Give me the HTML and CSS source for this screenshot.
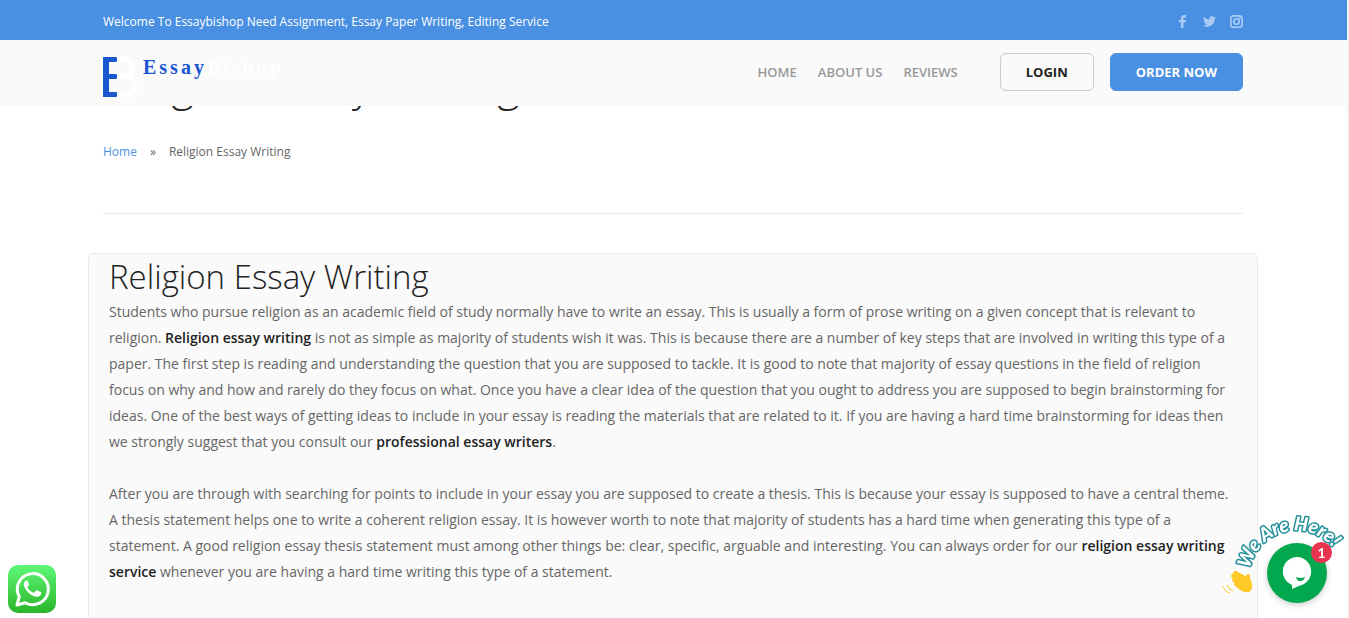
FILE: index.html
```html
<!DOCTYPE html>
<html lang="en">
    <head>
        <meta charset="utf-8">
        <meta name="viewport" content="width=device-width, initial-scale=1">
        <title>Religion Essay Writing</title>
        <link rel="stylesheet" href="styles.css">
    </head>
    <body>
        <header class="site_header">
            <div class="topbar">
                <div class="container topbar_cont">
                    <p class="welcome">Welcome To Essaybishop Need Assignment, Essay Paper Writing, Editing Service</p>
                    <div class="social">
                        <a href="#" aria-label="Facebook">
                            <svg width="13" height="13" viewBox="0 0 16 16"><path d="M6 16V9H3.500V6H6V4.200C6 1.600 7.500 0 10 0h2.500v3h-1.700C9.600 3 9.200 3.500 9.200 4.500V6h3.200L12 9H9.200v7z"/></svg>
                        </a>
                        <a href="#" aria-label="Twitter">
                            <svg width="13" height="13" viewBox="0 0 24 24"><path d="M24 4.600a10 10 0 0 1-2.800.8 5 5 0 0 0 2.100-2.700 10 10 0 0 1-3.100 1.200 4.900 4.900 0 0 0-8.400 4.500A14 14 0 0 1 1.700 3.200a4.900 4.900 0 0 0 1.500 6.500 5 5 0 0 1-2.200-.6 4.900 4.900 0 0 0 3.900 4.900 5 5 0 0 1-2.200.1 4.900 4.900 0 0 0 4.600 3.400A10 10 0 0 1 0 19.500 14 14 0 0 0 21.500 7.100 10 10 0 0 0 24 4.600z"/></svg>
                        </a>
                        <a href="#" aria-label="Instagram">
                            <svg class="outline" width="13" height="13" viewBox="0 0 24 24"><rect x="1.500" y="1.500" width="21" height="21" rx="5"/><circle cx="12" cy="12" r="5"/><circle cx="18" cy="6" r=".6"/></svg>
                        </a>
                    </div>
                </div>
            </div>
            <div class="navbar">
                <div class="container navbar_cont">
                    <a class="logo" href="#">
                        <svg width="34" height="42" viewBox="0 0 34 42" aria-hidden="true">
                            <g fill="none" stroke="#fff" stroke-width="4">
                                <rect x="10" y="3" width="19" height="18" rx="8"/>
                                <rect x="10" y="20" width="22" height="19" rx="9"/>
                            </g>
                            <rect x="0" y="0" width="14" height="42" fill="#fafafa"/>
                            <g fill="#1b57d0">
                                <rect x="0" y="1" width="6" height="40" rx="1"/>
                                <rect x="0" y="1" width="14" height="5" rx="1"/>
                                <rect x="0" y="18" width="14" height="5" rx="1"/>
                                <rect x="0" y="36" width="14" height="5" rx="1"/>
                            </g>
                        </svg>
                        <span class="logo_text">Essay<span class="logo_light">Bishop</span></span>
                    </a>
                    <nav class="menu">
                        <a href="#">HOME</a>
                        <a href="#">ABOUT US</a>
                        <a href="#">REVIEWS</a>
                    </nav>
                    <a class="btn btn_login" href="#">LOGIN</a>
                    <a class="btn btn_order" href="#">ORDER NOW</a>
                </div>
            </div>
        </header>
        <main>
            <section class="container page_title">
                <h1>Religion Essay Writing</h1>
                <nav class="breadcrumb" aria-label="Breadcrumb">
                    <a href="#">Home</a>
                    <span>»</span>
                    <span>Religion Essay Writing</span>
                </nav>
            </section>
            <article class="post">
                <h2>Religion Essay Writing</h2>
                <p>Students who pursue religion as an academic field of study normally have to write an essay. This is usually a form of prose writing on a given concept that is relevant to religion. <strong>Religion essay writing</strong> is not as simple as majority of students wish it was. This is because there are a number of key steps that are involved in writing this type of a paper. The first step is reading and understanding the question that you are supposed to tackle. It is good to note that majority of essay questions in the field of religion focus on why and how and rarely do they focus on what. Once you have a clear idea of the question that you ought to address you are supposed to begin brainstorming for ideas. One of the best ways of getting ideas to include in your essay is reading the materials that are related to it. If you are having a hard time brainstorming for ideas then we strongly suggest that you consult our <strong>professional essay writers</strong>.</p>
                <p>After you are through with searching for points to include in your essay you are supposed to create a thesis. This is because your essay is supposed to have a central theme. A thesis statement helps one to write a coherent religion essay. It is however worth to note that majority of students has a hard time when generating this type of a statement. A good religion essay thesis statement must among other things be: clear, specific, arguable and interesting. You can always order for our <strong>religion essay writing service</strong> whenever you are having a hard time writing this type of a statement.</p>
            </article>
        </main>
        <a class="whatsapp" href="#" aria-label="WhatsApp">
            <svg width="48" height="48" viewBox="0 0 48 48">
                <defs>
                    <linearGradient id="wa_green" x1="0" y1="0" x2="0" y2="1">
                        <stop offset="0" stop-color="#5ff777"/>
                        <stop offset="1" stop-color="#2ab529"/>
                    </linearGradient>
                </defs>
                <rect width="48" height="48" rx="10" fill="url(#wa_green)"/>
                <path d="M9 40l2.300-8.300A15.500 15.500 0 1 1 17.300 37.700z" fill="none" stroke="#fff" stroke-width="3" stroke-linejoin="round"/>
                <path d="M18.500 15.500c-1 0-2.700 1.500-2.700 4 0 2.700 2 5.200 3.600 7 2.400 2.600 5.500 5 9.300 5.300 2.200.1 4.300-1.400 4.500-3.100.1-.9 0-1.300-.6-1.600l-3.400-1.700c-.6-.3-1-.2-1.400.3l-1.300 1.700c-.4.500-.8.500-1.400.2-2.200-.9-4.200-2.700-5.400-4.800-.3-.5-.2-.9.200-1.300l1.100-1.400c.2-.4.2-.7 0-1.100l-1.400-3.200c-.2-.5-.5-.3-1.100-.3z" fill="#fff"/>
            </svg>
        </a>
        <div class="chat">
            <svg class="chat_art" width="127" height="108" viewBox="0 0 127 108">
                <path id="greeting_arc" d="M28 59A47 47 0 0 1 121 63A47 47 0 0 1 74 110" fill="none"/>
                <text class="greeting"><textPath href="#greeting_arc">We Are Here!</textPath></text>
                <!-- waving hand -->
                <g fill="none" stroke="#ffca28" stroke-width="4" stroke-linecap="round">
                    <path d="M13 63l9 5M11 66l9 5M12 70l9 5M16 75l7 4"/>
                    <path d="M26 72v-6"/>
                </g>
                <path d="M14 61l9 5q6 1 7 8 1 5-3 8-4 1-9-2l-6-5z" fill="#ffca28"/>
                <path d="M5 75q1 4 6 6M1 76q2 6 7 7" fill="none" stroke="#ffca28"/>
            </svg>
            <button class="chat_button" type="button" aria-label="Open chat">
                <svg width="60" height="60" viewBox="0 0 60 60">
                    <path d="M30 14a14.500 14.500 0 0 1 3 28.600L25 46v-4A14.500 14.500 0 0 1 30 14z" fill="#fff"/>
                    <path d="M29 34q5 2 9 0-1 4-5 4-3 0-4-4z" fill="#03a84e"/>
                </svg>
                <span class="chat_badge">1</span>
            </button>
        </div>
    </body>
</html>
```

FILE: styles.css
```css
* {
    box-sizing: border-box;
}
html {
    background: #f4f4f4;
    overflow: hidden;
}
body {
    margin: 0 2px 0 0;
    padding-right: 1px;
    background: #fff;
    color: #666;
    font-family: "Open Sans", "Noto Sans", sans-serif;
    font-size: 14px;
    line-height: 26px;
}
a {
    color: #4a90e2;
    text-decoration: none;
}
.container {
    max-width: 1170px;
    margin: 0 auto;
    padding: 0 15px;
}

/* header */
.site_header {
    position: fixed;
    top: 0;
    left: 0;
    right: 2px;
    z-index: 10;
}
.topbar,
.navbar {
    padding-right: 1px;
}
.topbar {
    background: #4a90e2;
    color: #fff;
}
.topbar_cont {
    display: flex;
    justify-content: space-between;
    align-items: center;
    height: 40px;
    padding-top: 3px;
}
.welcome {
    margin: 0;
    font-size: 12px;
}
.social {
    display: flex;
    gap: 14px;
}
.social svg {
    display: block;
    fill: #a9cbf3;
}
.social svg.outline {
    fill: none;
    stroke: #a9cbf3;
    stroke-width: 3px;
}
.navbar {
    background: #fafafa;
}
.navbar_cont {
    display: flex;
    align-items: center;
    height: 66px;
    padding-bottom: 2px;
}
.logo {
    display: flex;
    gap: 6px;
    margin-right: auto;
    padding-top: 10px;
}
.logo_text {
    color: #1b57d0;
    font-family: "Liberation Serif", serif;
    font-size: 20px;
    font-weight: bold;
    letter-spacing: 3px;
    line-height: 22px;
}
.logo_light {
    color: #fff;
}
.menu {
    display: flex;
    gap: 21px;
    margin-right: 42px;
}
.menu a {
    color: #999;
    font-size: 13px;
    font-weight: 600;
}
.btn {
    border: 1px solid #ccc;
    border-radius: 6px;
    padding: 6px 25px;
    font-size: 13px;
    font-weight: 700;
    line-height: 24px;
}
.btn_login {
    color: #222;
    margin-right: 16px;
}
.btn_order {
    background: #4a90e2;
    border-color: #4a90e2;
    color: #fff;
}

/* page title */
.page_title {
    padding-top: 55px;
}
.page_title h1 {
    margin: 0;
    color: #222;
    font-size: 43px;
    font-weight: 300;
    line-height: 60px;
}
.breadcrumb {
    display: flex;
    gap: 13px;
    padding: 24px 0 48px;
    border-bottom: 1px solid #eaeaea;
    font-size: 12px;
}

/* article */
.post {
    max-width: 1170px;
    margin: 39px auto 0;
    padding: 0 20px 26px;
    background: #fafafa;
    border: 1px solid #eaeaea;
    border-radius: 5px;
}
.post h2 {
    margin: 0;
    color: #222;
    font-size: 33px;
    font-weight: 300;
    line-height: 45px;
}
.post p {
    margin: 0 0 26px;
}
.post strong {
    color: #222;
    font-weight: 600;
}

/* floating widgets */
.whatsapp {
    position: fixed;
    left: 8px;
    bottom: 5px;
}
.whatsapp svg {
    display: block;
}
.chat {
    position: fixed;
    right: 0;
    bottom: 0;
    width: 127px;
    height: 108px;
}
.chat_art {
    display: block;
    overflow: visible;
}
.greeting {
    fill: #fff;
    stroke: #24909c;
    stroke-width: 3px;
    stroke-linejoin: round;
    paint-order: stroke;
    font-family: Lato, sans-serif;
    font-size: 19px;
    font-style: italic;
    font-weight: 900;
}
.chat_button {
    position: absolute;
    right: 22px;
    bottom: 15px;
    width: 60px;
    height: 60px;
    padding: 0;
    border: 0;
    border-radius: 50%;
    background: #03a84e;
    box-shadow: 0 2px 6px rgba(0, 0, 0, 0.2);
}
.chat_button svg {
    display: block;
}
.chat_badge {
    position: absolute;
    top: -1px;
    right: -5px;
    width: 21px;
    height: 21px;
    border-radius: 50%;
    background: #e8344e;
    color: #fff;
    font: bold 14px/21px Lato, sans-serif;
}
```
